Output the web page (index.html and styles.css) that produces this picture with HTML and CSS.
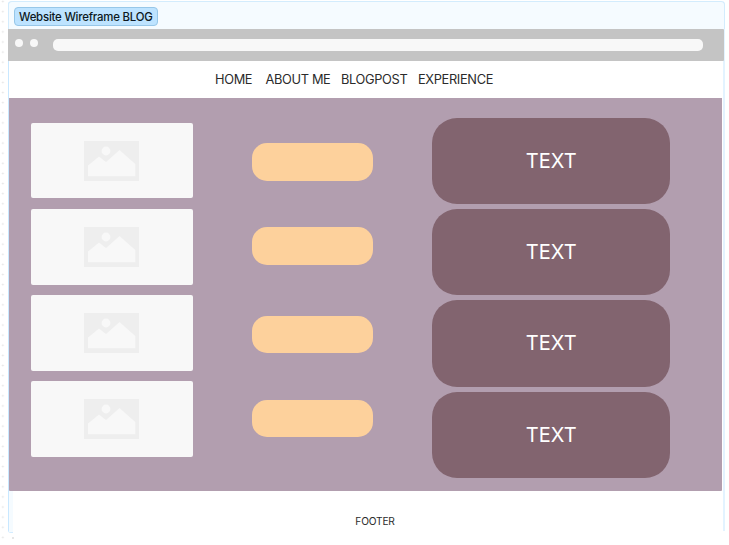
FILE: index.html
```html
<!DOCTYPE html>
<html lang="en">
<head>
<meta charset="utf-8">
<title>Website Wireframe BLOG</title>
<link rel="stylesheet" href="styles.css">
</head>
<body>
<svg class="symbols" aria-hidden="true">
  <symbol id="picture" viewBox="0 0 55 40">
    <path fill="#eee" d="M0 0h55v40H0z"/>
    <circle cx="22" cy="10" r="4.4" fill="#f8f8f8"/>
    <path fill="#f8f8f8" d="M4 24.5 15 15.5l7 5.5L35.5 9 51.300 23v12.300H4z"/>
  </symbol>
</svg>
<div class="canvas">
  <div class="board">
    <div class="board-head"><h1 class="board-title">Website Wireframe BLOG</h1></div>
    <div class="browser-bar">
      <span class="dot"></span><span class="dot"></span><span class="address"></span>
    </div>
    <nav class="nav"><span>HOME</span><span>ABOUT ME</span><span>BLOGPOST</span><span>EXPERIENCE</span></nav>
    <main class="content">
      <div class="pictures">
        <div class="picture"><svg class="icon"><use href="#picture"/></svg></div>
        <div class="picture"><svg class="icon"><use href="#picture"/></svg></div>
        <div class="picture"><svg class="icon"><use href="#picture"/></svg></div>
        <div class="picture"><svg class="icon"><use href="#picture"/></svg></div>
      </div>
      <div class="pills">
        <div class="pill"></div><div class="pill"></div><div class="pill pill-spaced"></div><div class="pill"></div>
      </div>
      <div class="texts">
        <div class="text">TEXT</div><div class="text">TEXT</div><div class="text">TEXT</div><div class="text">TEXT</div>
      </div>
    </main>
    <footer class="footer">FOOTER</footer>
  </div>
</div>
</body>
</html>
```

FILE: styles.css
```css
* { box-sizing: border-box; }
body { margin: 0; background: #fff; font-family: Inter, "Liberation Sans", sans-serif; color: #2b2b2b; }
.symbols { display: block; width: 0; height: 0; position: absolute; }
.canvas {
  width: 729px;
  height: 545px;
  padding: 1px 0 0 8px;
  overflow: hidden;
  background:
    radial-gradient(circle at 50% 50%, #e2e2e2 0.7px, transparent 1.1px) -2.200px -3.500px / 10.110px 10.110px repeat-y,
    radial-gradient(circle at 50% 50%, #e6e6e6 0.7px, transparent 1.1px) 8px 532.500px / 10px 10px no-repeat;
}
.board {
  width: 717px;
  height: 532px;
  border-radius: 4px 4px 0 3px;
  background: linear-gradient(#c9e8ff, #c9e8ff) 0 0 / 1px 100% no-repeat,
    linear-gradient(#e3f3ff, #e3f3ff) 715px 0 / 2px 530px no-repeat,
    linear-gradient(#d3ecff, #d3ecff) 0 531px / 5px 1px no-repeat,
    linear-gradient(#f5fbff, #f5fbff) 1px 0 / 4px 531px no-repeat,
    #fff;
}
.board-head {
  height: 28px;
  padding: 5px;
  background: #f5fbff;
  border: 1px solid #d3ecfd;
  border-bottom: 0;
  border-radius: 4px 4px 0 0;
  display: flex;
}
.board-title {
  margin: 0;
  width: 144px;
  height: 19px;
  border: 1px solid #97c7e8;
  border-radius: 4px;
  background: #bde3ff;
  padding-left: 4px;
  font-size: 11.400px;
  font-weight: 550;
  letter-spacing: -0.210px;
  line-height: 19px;
  color: #0c1821;
  white-space: nowrap;
}
.browser-bar {
  width: 716px;
  height: 32px;
  background: #c4c4c4;
  border-radius: 0 1px 1px 0;
  padding: 10px 0 0 7.200px;
  display: flex;
}
.dot { flex: none; width: 8px; height: 8px; border-radius: 50%; background: #f8f8f8; margin-right: 7.300px; }
.address { width: 650px; height: 11.500px; margin-left: 7.700px; border-radius: 5px; background: #f8f8f8; }
.nav {
  width: 713.500px;
  height: 37px;
  margin-left: 1px;
  padding-left: 206px;
  display: grid;
  grid-template-columns: 50.500px 75.500px 77px 80px;
  background: #fff;
  font-size: 12.800px;
  letter-spacing: -0.330px;
  line-height: 37px;
  white-space: nowrap;
}
.content {
  width: 713px;
  height: 393.300px;
  margin-left: 1px;
  display: flex;
  background: #b29eaf;
  border-radius: 0 0 1px 1px;
}
.pictures { margin: 24.700px 0 0 21.700px; width: 162px; display: flex; flex-direction: column; gap: 10.400px; }
.picture {
  height: 75.800px;
  background: #f8f8f8;
  border-radius: 2px;
  display: flex;
  align-items: center;
  justify-content: center;
}
.icon { width: 55px; height: 40px; }
.pills { margin: 45px 0 0 59.600px; width: 120.500px; }
.pill { height: 37.600px; margin-bottom: 46.500px; border-radius: 15px; background: #fdd19c; }
.pill-spaced { margin-top: 51px; }
.texts { margin: 19.700px 0 0 59.700px; width: 237.500px; display: flex; flex-direction: column; gap: 5px; }
.text {
  height: 86.300px;
  border-radius: 25px;
  background: #82646f;
  color: #fff;
  font-size: 20px;
  line-height: 87.400px;
  text-align: center;
}
.footer {
  height: 40.700px;
  margin: 0 2px 0 5px;
  padding: 23px 0 0 14px;
  background: #fff;
  font-size: 10.200px;
  letter-spacing: -0.200px;
  line-height: 14px;
  text-align: center;
}
```
